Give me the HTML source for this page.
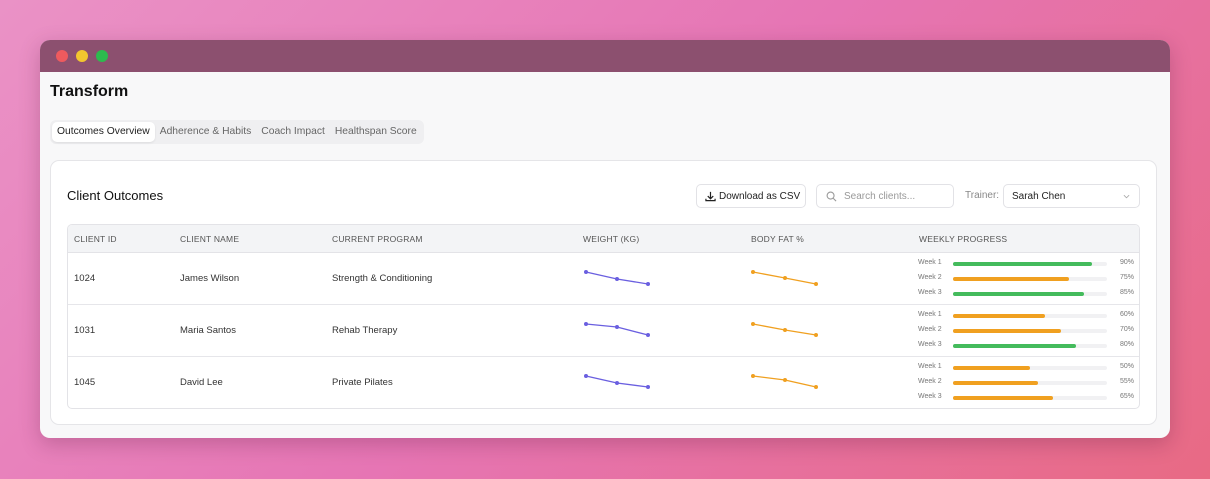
<!DOCTYPE html>
<html><head><style>
*{box-sizing:border-box;margin:0;padding:0}
body{width:1210px;height:479px;overflow:hidden;font-family:"Liberation Sans",sans-serif;background:linear-gradient(135deg,#ea92c6 0%,#e675b4 50%,#e86a84 100%);position:relative}
.win{position:absolute;left:40px;top:40px;width:1130px;height:398px;border-radius:10px;background:#f8f8f9;overflow:hidden;box-shadow:0 6px 20px rgba(80,20,50,.25)}
.tb{height:32px;background:#8c506f;position:relative}
.dot{position:absolute;top:10px;width:12px;height:12px;border-radius:50%}
h1{position:absolute;left:10px;top:43px;font-size:16px;font-weight:bold;color:#111}
.tabs{position:absolute;left:10px;top:80px;height:24px;background:#efeff1;border-radius:6px;display:flex;padding:2px;font-size:10.3px;color:#666}
.tabs div{padding:0 5px;line-height:20px}
.tabs .a{background:#fff;color:#222;border-radius:5px;box-shadow:0 1px 2px rgba(0,0,0,.08)}
.card{position:absolute;left:10px;top:120px;width:1107px;height:265px;background:#fff;border:1px solid #e5e5e8;border-radius:9px}
.ct{position:absolute;left:16px;top:27px;font-size:13px;color:#111}
.btn{position:absolute;top:23px;height:24px;border:1px solid #e2e2e6;border-radius:5px;font-size:10px;color:#222;background:#fff;display:flex;align-items:center}
.tbl{position:absolute;left:16px;top:63px;width:1073px;height:185px;border:1px solid #e3e3e7;border-radius:5px;overflow:hidden}
.hd{height:28px;background:#f3f4f6;border-bottom:1px solid #e3e3e7;position:relative;font-size:8.5px;color:#555;letter-spacing:.2px}
.hd span,.r span{position:absolute}
.hd span{top:9px}
.r{height:52px;border-bottom:1px solid #e6e6ea;position:relative;font-size:9.5px;color:#333}
.r:last-child{border-bottom:none}
.r>span{top:20px}
.pg{position:absolute;left:850px;font-size:7px;color:#777;width:216px;height:10px}
.pg .tr{position:absolute;left:35px;top:3px;width:154px;height:4px;background:#f1f1f3;border-radius:2px}
.pg .f{height:4px;border-radius:2px}
.pg .p{position:absolute;right:0;top:0}
.g{background:#44bb5c}.o{background:#f0a020}
</style></head><body>
<div class="win">
<div class="tb"><div class="dot" style="left:16px;background:#ee5a5e"></div><div class="dot" style="left:36px;background:#f2c62f"></div><div class="dot" style="left:56px;background:#2dba4e"></div></div>
<h1>Transform</h1>
<div class="tabs"><div class="a">Outcomes Overview</div><div>Adherence &amp; Habits</div><div>Coach Impact</div><div>Healthspan Score</div></div>
<div class="card">
<div class="ct">Client Outcomes</div>
<div class="btn" style="left:645px;width:110px;padding-left:22px"><svg style="position:absolute;left:8px;top:6px" width="11" height="11" viewBox="0 0 12 12" fill="none" stroke="#222" stroke-width="1.3"><path d="M6 1v7M3 5.5l3 3 3-3M1 8.5v2h10v-2"/></svg>Download as CSV</div>
<div class="btn" style="left:765px;width:138px;padding-left:27px;color:#999"><svg style="position:absolute;left:9px;top:6px" width="11" height="11" viewBox="0 0 12 12" fill="none" stroke="#999" stroke-width="1.2"><circle cx="5" cy="5" r="3.8"/><path d="M8 8l3 3"/></svg>Search clients...</div>
<span style="position:absolute;left:914px;top:29px;font-size:10px;color:#888">Trainer:</span>
<div class="btn" style="left:952px;width:137px;padding-left:8px">Sarah Chen<svg style="position:absolute;right:9px;top:9px" width="7" height="5" viewBox="0 0 8 5" fill="none" stroke="#aaa"><path d="M1 1l3 3 3-3"/></svg></div>
<div class="tbl">
<div class="hd"><span style="left:6px">CLIENT ID</span><span style="left:112px">CLIENT NAME</span><span style="left:264px">CURRENT PROGRAM</span><span style="left:515px">WEIGHT (KG)</span><span style="left:683px">BODY FAT %</span><span style="left:851px">WEEKLY PROGRESS</span></div>
<div class="r"><span style="left:6px">1024</span><span style="left:112px">James Wilson</span><span style="left:264px">Strength &amp; Conditioning</span>
<svg style="position:absolute;left:0;top:0" width="900" height="52"><polyline points="518,19 549,26 580,31" fill="none" stroke="#6a5fe0" stroke-width="1.3"/><g fill="#6a5fe0"><circle cx="518" cy="19" r="2"/><circle cx="549" cy="26" r="2"/><circle cx="580" cy="31" r="2"/></g><polyline points="685,19 717,25 748,31" fill="none" stroke="#f0a020" stroke-width="1.3"/><g fill="#f0a020"><circle cx="685" cy="19" r="2"/><circle cx="717" cy="25" r="2"/><circle cx="748" cy="31" r="2"/></g></svg>
<div class="pg" style="top:6px">Week 1<div class="tr"><div class="f g" style="width:90%"></div></div><span class="p">90%</span></div>
<div class="pg" style="top:21px">Week 2<div class="tr"><div class="f o" style="width:75%"></div></div><span class="p">75%</span></div>
<div class="pg" style="top:36px">Week 3<div class="tr"><div class="f g" style="width:85%"></div></div><span class="p">85%</span></div>
</div>
<div class="r"><span style="left:6px">1031</span><span style="left:112px">Maria Santos</span><span style="left:264px">Rehab Therapy</span>
<svg style="position:absolute;left:0;top:0" width="900" height="52"><polyline points="518,19 549,22 580,30" fill="none" stroke="#6a5fe0" stroke-width="1.3"/><g fill="#6a5fe0"><circle cx="518" cy="19" r="2"/><circle cx="549" cy="22" r="2"/><circle cx="580" cy="30" r="2"/></g><polyline points="685,19 717,25 748,30" fill="none" stroke="#f0a020" stroke-width="1.3"/><g fill="#f0a020"><circle cx="685" cy="19" r="2"/><circle cx="717" cy="25" r="2"/><circle cx="748" cy="30" r="2"/></g></svg>
<div class="pg" style="top:6px">Week 1<div class="tr"><div class="f o" style="width:60%"></div></div><span class="p">60%</span></div>
<div class="pg" style="top:21px">Week 2<div class="tr"><div class="f o" style="width:70%"></div></div><span class="p">70%</span></div>
<div class="pg" style="top:36px">Week 3<div class="tr"><div class="f g" style="width:80%"></div></div><span class="p">80%</span></div>
</div>
<div class="r"><span style="left:6px">1045</span><span style="left:112px">David Lee</span><span style="left:264px">Private Pilates</span>
<svg style="position:absolute;left:0;top:0" width="900" height="52"><polyline points="518,19 549,26 580,30" fill="none" stroke="#6a5fe0" stroke-width="1.3"/><g fill="#6a5fe0"><circle cx="518" cy="19" r="2"/><circle cx="549" cy="26" r="2"/><circle cx="580" cy="30" r="2"/></g><polyline points="685,19 717,23 748,30" fill="none" stroke="#f0a020" stroke-width="1.3"/><g fill="#f0a020"><circle cx="685" cy="19" r="2"/><circle cx="717" cy="23" r="2"/><circle cx="748" cy="30" r="2"/></g></svg>
<div class="pg" style="top:6px">Week 1<div class="tr"><div class="f o" style="width:50%"></div></div><span class="p">50%</span></div>
<div class="pg" style="top:21px">Week 2<div class="tr"><div class="f o" style="width:55%"></div></div><span class="p">55%</span></div>
<div class="pg" style="top:36px">Week 3<div class="tr"><div class="f o" style="width:65%"></div></div><span class="p">65%</span></div>
</div>
</div>
</div>
</div>
</body></html>
